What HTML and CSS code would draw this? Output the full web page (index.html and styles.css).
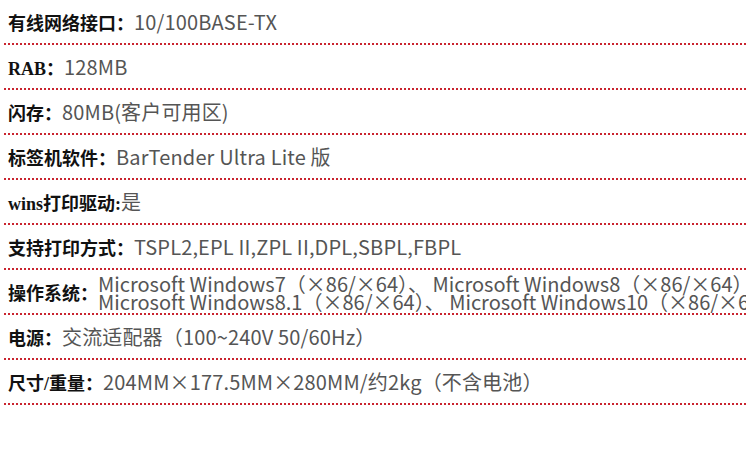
FILE: index.html
```html
<!DOCTYPE html>
<html lang="zh-CN">
<head>
<meta charset="utf-8">
<link rel="stylesheet" href="styles.css">
</head>
<body>
<div class="spec">
  <div class="row"><span class="label">有线网络接口：</span><span class="val">10/100BASE-TX</span></div>
  <div class="row"><span class="label">RAB：</span><span class="val">128MB</span></div>
  <div class="row"><span class="label">闪存：</span><span class="val">80MB(客户可用区)</span></div>
  <div class="row"><span class="label">标签机软件：</span><span class="val">BarTender Ultra Lite 版</span></div>
  <div class="row"><span class="label">wins打印驱动:</span><span class="val">是</span></div>
  <div class="row"><span class="label">支持打印方式：</span><span class="val">TSPL2,EPL II,ZPL II,DPL,SBPL,FBPL</span></div>
  <div class="row"><span class="label">操作系统：</span><span class="val multi">Microsoft Windows7（×86/×64）、 Microsoft Windows8（×86/×64）<br>Microsoft Windows8.1（×86/×64）、 Microsoft Windows10（×86/×64）</span></div>
  <div class="row"><span class="label">电源：</span><span class="val">交流适配器（100~240V 50/60Hz）</span></div>
  <div class="row"><span class="label">尺寸/重量：</span><span class="val">204MM×177.5MM×280MM/约2kg（不含电池）</span></div>
</div>
</body>
</html>
```

FILE: styles.css
```css
html, body {
  margin: 0;
  padding: 0;
  background: #fff;
  overflow: hidden;
}
.spec {
  padding: 0 4px;
}
.row {
  height: 43px;
  display: flex;
  align-items: center;
  border-bottom: 2px dotted #c9242f;
  padding-left: 4px;
  white-space: nowrap;
  overflow: hidden;
}
.label {
  font-family: "Liberation Serif", "Noto Sans CJK SC", serif;
  font-weight: 700;
  font-size: 18px;
  color: #111;
  flex: none;
}
.val {
  font-family: "Noto Sans CJK SC", sans-serif;
  font-weight: 400;
  font-size: 20px;
  letter-spacing: 0.15px;
  color: #555;
}
.multi {
  font-size: 20px;
  line-height: 18px;
  letter-spacing: 0;
  padding-top: 2px;
}
```
